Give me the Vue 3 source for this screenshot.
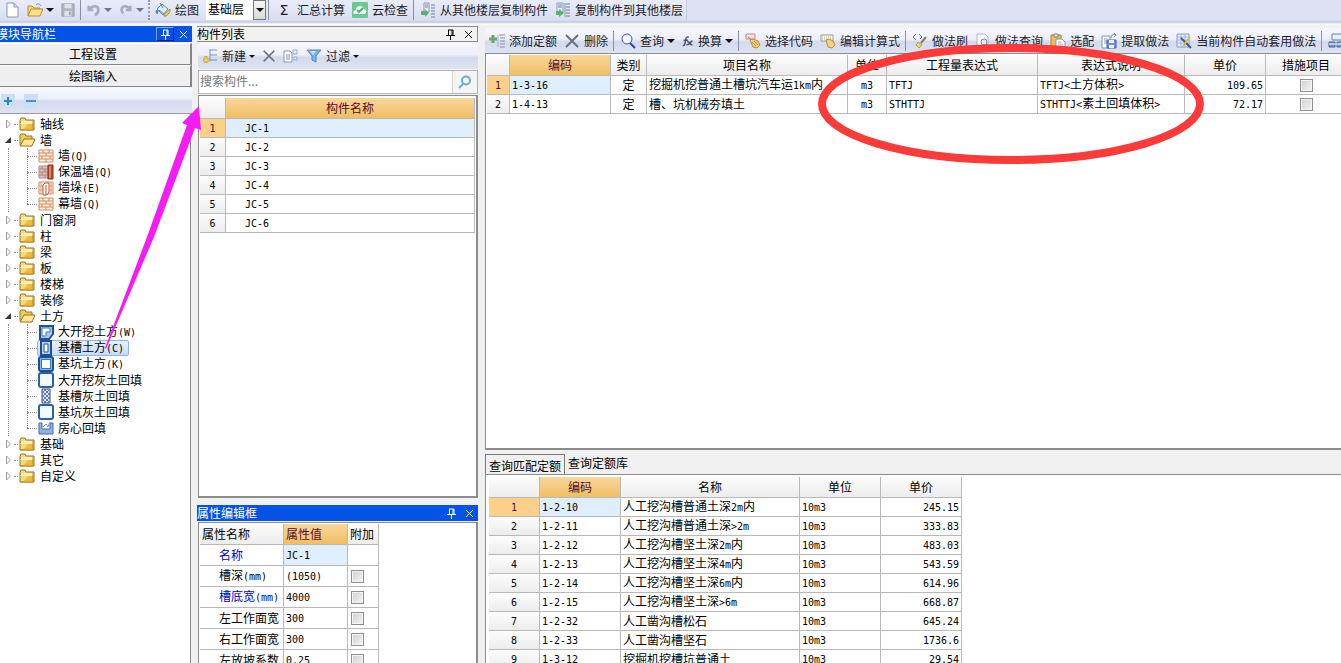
<script setup>
import { h, ref } from 'vue'

// Splits mixed text so half-width characters keep their narrow cell width
const T = (props) =>
  h(
    'span',
    { class: 'mixed' },
    (props.v.match(/[\x21-\x7e]+|[^\x21-\x7e]+/g) || []).map((run) =>
      /^[\x21-\x7e]/.test(run) ? h('span', { class: 'half' }, run) : run
    )
  )
T.props = ['v']

const art = {
  doc: '<path d="M3 1h7l4 4v10H3z" fill="#fff" stroke="#8c96ac"/><path d="M10 1v4h4" fill="#d9e2f2" stroke="#8c96ac"/>',
  open: '<path d="M1 14V4h4l2 2h6v3" fill="#f7d575" stroke="#c08d2c"/><path d="M1 14l3-7h12l-3 7z" fill="#fbe18e" stroke="#c08d2c"/><path d="M9 3c2-2 4-1 5 1" fill="none" stroke="#6b8cc4"/>',
  save: '<path d="M1 1h14v14H1z" fill="#aeb3c0" stroke="#9a9fad"/><path d="M4 1h8v5H4zM4 9h8v6H4z" fill="#dfe2ea"/><path d="M9 10h2v4H9z" fill="#9a9fad"/>',
  undo: '<path d="M2 3v5h5M3 7c4-5 10-4 10 1 0 3-2 5-4 6" fill="none" stroke="#a6adbf" stroke-width="3"/>',
  redo: '<path d="M13 3v5H8M12 7C9 2 3 3 3 8c0 2 1 3 2 4" fill="none" stroke="#a6adbf" stroke-width="3"/>',
  bucket: '<path d="M2 7l5-5 6 5-5 6z" fill="#dcebfa" stroke="#6287b8"/><path d="M4 8l5 4M5 1l3 5" stroke="#6287b8" fill="none"/><path d="M9 14c0-2 2-3 6-7 1 3-3 8-6 7z" fill="#f3cd58" stroke="#a68a38"/><path d="M1 8c-1 2 0 4 1 4s2-2 1-4z" fill="#4b88cf"/>',
  cloud: '<rect width="16" height="16" rx="1" fill="#6cc890"/><path d="M3 12c-3 0-2-4 1-4 0-5 7-5 8-1 3 0 3 5 0 5z" fill="#f4fcf7"/><path d="M5 8l2 2 4-4" fill="none" stroke="#4bb476" stroke-width="2"/>',
  floorFrom: '<path d="M4 1h5v9H4z" fill="#eef2fa" stroke="#8793ad"/><path d="M5 3h3M5 5h3M11 3h4M11 6h4M11 9h4M11 12h4M11 15h4" stroke="#6b83b3"/><path d="M1 9h4V7l4 4-4 4v-2H1z" fill="#53b36b"/>',
  floorTo: '<path d="M2 1h6v9H2z" fill="#eef2fa" stroke="#7f9dcb"/><path d="M3 3h4M3 5h4M11 2h4M11 5h4M11 8h4M11 11h4M11 14h4" stroke="#717b90"/><path d="M10 1v14" stroke="#8793ad"/><path d="M1 9h3V7l5 4-5 4v-2H1z" fill="#53b36b"/>',
  newItem: '<path d="M8 1v12M8 2h7M8 7h7M8 12h7" fill="none" stroke="#8093b5"/><path d="M4 8v7M1 12h7" stroke="#d5a31c" stroke-width="3"/><path d="M4 9v5M2 12h5" stroke="#ffe680"/>',
  cross: '<path d="M2 2l12 12M14 2L2 14" fill="none" stroke="#6d7078" stroke-width="2"/>',
  copy: '<path d="M1 3h6l2 2v9H1z" fill="#fff" stroke="#8594b3"/><path d="M3 7h4M3 9h4M3 11h4" stroke="#8594b3"/><path d="M10 2h4v4h-4zM11 9h3v3h-3z" fill="#eef3fb" stroke="#93a9cf"/>',
  funnel: '<path d="M1 2h14L10 8v6l-4-2V8z" fill="#7db1ea" stroke="#4f85c4"/><path d="M4 3h6L7 7z" fill="#c8e0f8"/>',
  addQuota: '<path d="M4 2v8M0 6h8" stroke="#69a86a" stroke-width="3"/><path d="M10 2h6M11 5h5M11 8h5M11 11h5M11 14h5" stroke="#8790a3"/><path d="M9 2v12" stroke="#a4adbd"/>',
  find: '<circle cx="7" cy="6" r="5" fill="#eef5ff" stroke="#46569b"/><path d="M10 10l5 5" stroke="#34449a" stroke-width="2"/>',
  fx: '<path d="M1 14c3 1 3-4 4-8 0-3 2-4 4-3M2 7h6M7 9c4-1 3 5 7 4M14 8c-3 0-4 6-8 5" fill="none" stroke="#4a5266" stroke-width="2"/>',
  pick: '<path d="M1 1h9v5H1z" fill="#f5e3e0" stroke="#c48a85"/><path d="M3 4l6 5" stroke="#b8665f"/><path d="M5 7l3-1 5 2 2 4-3 3-4-1z" fill="#f4cf7c" stroke="#b78d3b"/><path d="M7 9l4 4M9 8l4 4" stroke="#b78d3b"/>',
  calc: '<path d="M1 2h12v6H1z" fill="#fffbe9" stroke="#9b9b8f"/><path d="M2 4h10M2 6h10" stroke="#b8b29a" stroke-dasharray="1 1"/><path d="M6 7l3-1 4 2 2 4-3 3-4-1z" fill="#f4cf7c" stroke="#b78d3b"/>',
  brush: '<path d="M4 1L1 4l3 3M7 1l3 3-2 2" fill="none" stroke="#69718a"/><path d="M14 4l-5 6" stroke="#8e7b58" stroke-width="2"/><path d="M6 9l4 3-3 3-3-3z" fill="#f0d27a" stroke="#b99b43"/>',
  docFind: '<path d="M2 1h8l3 3v10H2z" fill="#f9fbff" stroke="#a9b4ca"/><circle cx="9" cy="9" r="3" fill="#dcecff" stroke="#7290bf"/><path d="M11 11l4 4" stroke="#b39051" stroke-width="2"/>',
  paste: '<path d="M1 2h10v12H1z" fill="#e9bd62" stroke="#a9802f"/><path d="M4 1h4v3H4z" fill="#d9dde5" stroke="#888"/><path d="M6 6h6l3 3v6H6z" fill="#fff" stroke="#8b93a5"/><path d="M8 9h3M8 11h5M8 13h5" stroke="#9fa9bc"/>',
  extract: '<path d="M1 3h8v12H1z" fill="#fff" stroke="#8594b3"/><path d="M3 6h3M3 8h3M3 10h3" stroke="#8594b3"/><path d="M6 7h9v8H6z" fill="#6f92cf" stroke="#44639e"/><path d="M8 7h5v3H8zM8 12h5v3H8z" fill="#eaf0fa"/><path d="M10 5c0-3 2-4 5-3M13 0l2 2-2 2" fill="none" stroke="#6785bb"/>',
  auto: '<path d="M1 1h12v13H1z" fill="#eaf1fc" stroke="#7f9acb"/><path d="M1 4h12M1 7h12M1 10h12M5 1v13M9 1v13" stroke="#9db3da"/><path d="M5 5l10 10" stroke="#46577c" stroke-width="2"/><path d="M14 4l-7 9" stroke="#e0b34d" stroke-width="2"/>',
  people: '<path d="M4 1h11v6H4z" fill="#e8effa" stroke="#6781b0"/><path d="M1 9h6v5H1zM9 9h6v5H9z" fill="#7d9cce" stroke="#44639e"/><path d="M1 11h14" stroke="#fff"/>',
  folder: '<path d="M1 14V4l1-2h4l1 2h8v10z" fill="#f6d979" stroke="#8d7433"/><path d="M2 5h12v3H2z" fill="#fff2b0"/><path d="M9 8h5v6H4z" fill="#efb93d"/><path d="M14 5v9H2" fill="none" stroke="#c08a22"/>',
  folderOpen: '<path d="M1 13V3l1-1h4l1 2h6v3" fill="#f3cb55" stroke="#8d7433"/><path d="M1 14l4-7h11l-3 7z" fill="#ffe88f" stroke="#8d7433"/>',
  brick: '<path d="M1 2h14v12H1z" fill="#fff1e4" stroke="#c98f6a"/><path d="M1 5h14M1 8h14M1 11h14M5 2v3M11 2v3M8 5v3M4 8v3M12 8v3M8 11v3" stroke="#d98555" fill="none"/>',
  brickWarm: '<path d="M1 2h9v12H1z" fill="#d9c4bd" stroke="#b09087"/><path d="M1 5h9M1 8h9M1 11h9M4 2v3M7 5v3M4 8v3M7 11v3" stroke="#a98278"/><path d="M10 1h5v14h-5z" fill="#b4492d" stroke="#8a3018"/><path d="M12 2v12" stroke="#f6cdbb"/>',
  pier: '<path d="M1 2h14v12H1z" fill="#fff1e4" stroke="#c98f6a"/><path d="M1 6h14M1 10h14M13 2v12M3 2v12" stroke="#e4a079"/><path d="M5 15V5l2-2h4v9l-2 3zM8 5v10" fill="#fff" stroke="#c25331"/>',
  pitL: '<path d="M2 2h13v8l-4 5H2z" fill="#a9cdf2" stroke="#1d5299" stroke-width="2"/><path d="M4 4h8v4H8v4H4z" fill="#fff" stroke="#3d75bb"/>',
  trench: '<path d="M3 1h10v14H3z" fill="#b9d4f3" stroke="#1d4f94" stroke-width="2"/><path d="M6 4h4v8H6z" fill="#fff" stroke="#1d4f94"/>',
  pit: '<rect x="1" y="1" width="14" height="14" rx="2" fill="#8ebbe9" stroke="#17509a" stroke-width="2"/><rect x="3.500" y="3.500" width="9" height="9" fill="#fff" stroke="#3d75bb"/>',
  fill: '<rect x="1" y="1" width="14" height="14" rx="2" fill="#f3f8ff" stroke="#2a60a8" stroke-width="2"/>',
  hatch: '<path d="M4 1h8v14H4z" fill="#dce7f5" stroke="#274f86"/><path d="M4 5l4-4M4 9l8-8M4 13l8-8M6 15l6-6M10 15l2-2M4 11l4 4M4 7l8 8M4 3l8 8M6 1l6 6" stroke="#5b7ba8"/>',
  room: '<path d="M1 3v11h14V3h-3v6H4V3z" fill="#8fb3dd" stroke="#3e6ca9"/><path d="M5 7l3-3 2 3 2-5" fill="none" stroke="#6c8fbf"/>'
}

const Icon = (props) =>
  h('svg', { class: 'icon', width: props.w || 16, height: props.w || 16, viewBox: '0 0 16 16', 'aria-hidden': 'true', innerHTML: art[props.n] })
Icon.props = ['n', 'w']

const mainTools = [
  { icon: 'doc', tip: '新建工程' },
  { icon: 'open', tip: '打开', menu: true },
  { icon: 'save', tip: '保存', w: 14 },
  { sep: true },
  { icon: 'undo', tip: '撤销', menu: true, w: 14, off: true },
  { icon: 'redo', tip: '恢复', menu: true, w: 14, off: true },
  { grip: true },
  { icon: 'bucket', text: '绘图' }
]
const floorTools = [
  { sep: true },
  { sigma: true, text: '汇总计算' },
  { icon: 'cloud', text: '云检查' },
  { sep: true },
  { icon: 'floorFrom', text: '从其他楼层复制构件' },
  { icon: 'floorTo', text: '复制构件到其他楼层' }
]
const listTools = [
  { icon: 'newItem', text: '新建', menu: true },
  { icon: 'cross', tip: '删除', w: 14 },
  { icon: 'copy', tip: '复制' },
  { icon: 'funnel', text: '过滤', menu: true }
]
const quotaTools = [
  { icon: 'addQuota', text: '添加定额' },
  { icon: 'cross', text: '删除' },
  { sep: true },
  { icon: 'find', text: '查询', menu: true },
  { icon: 'fx', text: '换算', menu: true, w: 12 },
  { sep: true },
  { icon: 'pick', text: '选择代码' },
  { icon: 'calc', text: '编辑计算式' },
  { sep: true },
  { icon: 'brush', text: '做法刷' },
  { icon: 'docFind', text: '做法查询' },
  { icon: 'paste', text: '选配' },
  { icon: 'extract', text: '提取做法' },
  { icon: 'auto', text: '当前构件自动套用做法' },
  { sep: true },
  { icon: 'people', tip: '更多' }
]

const Tools = (props) =>
  props.items.map((t) => {
    if (t.sep) return h('i', { class: 'sep' })
    if (t.grip) return h('i', { class: 'grip' })
    return h('button', { class: ['tool', { off: t.off }], type: 'button', 'aria-label': t.text || t.tip }, [
      t.sigma ? h('span', { class: 'sigma' }, 'Σ') : h(Icon, { n: t.icon, w: t.w }),
      t.text ? h('span', t.text) : null,
      t.menu ? h('i', { class: 'caret' }) : null
    ])
  })
Tools.props = ['items']

const tree = ref([
  { name: '轴线' },
  {
    name: '墙',
    kids: [
      { name: '墙(Q)', icon: 'brick' },
      { name: '保温墙(Q)', icon: 'brickWarm' },
      { name: '墙垛(E)', icon: 'pier' },
      { name: '幕墙(Q)', icon: 'brick' }
    ]
  },
  { name: '门窗洞' },
  { name: '柱' },
  { name: '梁' },
  { name: '板' },
  { name: '楼梯' },
  { name: '装修' },
  {
    name: '土方',
    kids: [
      { name: '大开挖土方(W)', icon: 'pitL' },
      { name: '基槽土方(C)', icon: 'trench' },
      { name: '基坑土方(K)', icon: 'pit' },
      { name: '大开挖灰土回填', icon: 'fill' },
      { name: '基槽灰土回填', icon: 'hatch' },
      { name: '基坑灰土回填', icon: 'fill' },
      { name: '房心回填', icon: 'room' }
    ]
  },
  { name: '基础' },
  { name: '其它' },
  { name: '自定义' }
])
const picked = ref('基槽土方(C)')
const keyword = ref('')
const floor = ref('基础层')

const parts = ['JC-1', 'JC-2', 'JC-3', 'JC-4', 'JC-5', 'JC-6']
const attrs = [
  { name: '名称', value: 'JC-1', blue: true },
  { name: '槽深(mm)', value: '(1050)', box: true },
  { name: '槽底宽(mm)', value: '4000', blue: true, box: true },
  { name: '左工作面宽', value: '300', box: true },
  { name: '右工作面宽', value: '300', box: true },
  { name: '左放坡系数', value: '0.25', box: true }
]
const quotas = [
  { code: '1-3-16', name: '挖掘机挖普通土槽坑汽车运1km内', expr: 'TFTJ', note: 'TFTJ<土方体积>', price: '109.65' },
  { code: '1-4-13', name: '槽、坑机械夯填土', expr: 'STHTTJ', note: 'STHTTJ<素土回填体积>', price: '72.17' }
]
const library = [
  ['1-2-10', '人工挖沟槽普通土深2m内', '245.15'],
  ['1-2-11', '人工挖沟槽普通土深>2m', '333.83'],
  ['1-2-12', '人工挖沟槽坚土深2m内', '483.03'],
  ['1-2-13', '人工挖沟槽坚土深4m内', '543.59'],
  ['1-2-14', '人工挖沟槽坚土深6m内', '614.96'],
  ['1-2-15', '人工挖沟槽坚土深>6m', '668.87'],
  ['1-2-32', '人工凿沟槽松石', '645.24'],
  ['1-2-33', '人工凿沟槽坚石', '1736.6'],
  ['1-3-12', '挖掘机挖槽坑普通土', '29.54']
]
</script>

<template>
  <div class="app">
    <header class="topbar">
      <div class="strip">
        <Tools :items="mainTools" />
        <div class="floor">
          <select v-model="floor" aria-label="楼层">
            <option>基础层</option>
          </select>
          <span class="drop"><i class="caret"></i></span>
        </div>
        <Tools :items="floorTools" />
      </div>
    </header>

    <main class="work">
      <aside class="nav">
        <div class="title active">
          <span class="cut">模块导航栏</span>
          <button class="pin framed" type="button" aria-label="固定">
            <svg width="11" height="11" viewBox="0 0 11 11"><path d="M3 1h5M3.500 1v5M7 1v5M8 1v5M1 6.500h9M5.500 7v4" fill="none" stroke="currentColor" /></svg>
          </button>
          <button class="pin" type="button" aria-label="关闭">
            <svg width="9" height="9" viewBox="0 0 9 9"><path d="M1 1l7 7M8 1L1 8" fill="none" stroke="currentColor" /></svg>
          </button>
        </div>
        <button class="section" type="button">工程设置</button>
        <button class="section" type="button">绘图输入</button>
        <div class="bar fold">
          <button class="mini" type="button" aria-label="展开">
            <svg width="12" height="12" viewBox="0 0 12 12"><path d="M6 2v8M2 6h8" stroke="#2f86c6" stroke-width="2" /></svg>
          </button>
          <button class="mini" type="button" aria-label="折叠">
            <svg width="12" height="12" viewBox="0 0 12 12"><path d="M1 6h10" stroke="#4a94cc" stroke-width="2" /></svg>
          </button>
        </div>
        <ul class="tree">
          <li v-for="node in tree" :key="node.name">
            <button class="node" type="button">
              <svg class="twist" width="8" height="10" viewBox="0 0 8 10">
                <path v-if="node.kids" d="M6 2v6H0z" fill="#333" />
                <path v-else d="M1.500 1l4 4-4 4z" fill="#fff" stroke="#999" />
              </svg>
              <i class="dash"></i>
              <Icon :n="node.kids ? 'folderOpen' : 'folder'" />
              <span>{{ node.name }}</span>
            </button>
            <ul v-if="node.kids" class="sub">
              <li v-for="kid in node.kids" :key="kid.name">
                <i class="dots"></i>
                <button class="leaf" :class="{ on: kid.name === picked }" type="button" @click="picked = kid.name">
                  <Icon :n="kid.icon" />
                  <T :v="kid.name" />
                </button>
              </li>
            </ul>
          </li>
        </ul>
      </aside>

      <section class="middle">
        <div class="title plain">
          <span>构件列表</span>
          <button class="pin" type="button" aria-label="固定">
            <svg width="11" height="11" viewBox="0 0 11 11"><path d="M3 1h5M3.500 1v5M7 1v5M8 1v5M1 6.500h9M5.500 7v4" fill="none" stroke="currentColor" /></svg>
          </button>
          <button class="pin" type="button" aria-label="关闭">
            <svg width="9" height="9" viewBox="0 0 9 9"><path d="M1 1l7 7M8 1L1 8" fill="none" stroke="currentColor" /></svg>
          </button>
        </div>
        <div class="bar list-bar"><Tools :items="listTools" /></div>
        <div class="search">
          <input v-model="keyword" type="text" placeholder="搜索构件..." aria-label="搜索构件" />
          <button type="button" aria-label="搜索">
            <svg width="14" height="14" viewBox="0 0 14 14"><circle cx="8" cy="5.500" r="4" fill="#f4faff" stroke="#62ace0" stroke-width="2" /><path d="M5 9l-4 4" stroke="#62ace0" stroke-width="2" /></svg>
          </button>
        </div>
        <div class="panel grow">
          <table class="grid parts">
            <colgroup><col class="c26" /><col /></colgroup>
            <thead><tr><th></th><th class="hot">构件名称</th></tr></thead>
            <tbody>
              <tr v-for="(p, i) in parts" :key="p" :class="{ cur: i === 0 }">
                <th scope="row"><T :v="String(i + 1)" /></th>
                <td class="key indent"><T :v="p" /></td>
              </tr>
            </tbody>
          </table>
        </div>
        <div class="attr-dock">
          <div class="title active">
            <span>属性编辑框</span>
            <button class="pin" type="button" aria-label="固定">
              <svg width="11" height="11" viewBox="0 0 11 11"><path d="M3 1h5M3.500 1v5M7 1v5M8 1v5M1 6.500h9M5.500 7v4" fill="none" stroke="currentColor" /></svg>
            </button>
            <button class="pin" type="button" aria-label="关闭">
              <svg width="9" height="9" viewBox="0 0 9 9"><path d="M1 1l7 7M8 1L1 8" fill="none" stroke="currentColor" /></svg>
            </button>
          </div>
          <div class="panel grow">
            <table class="grid attrs">
              <colgroup><col class="c84" /><col class="c64" /><col class="c31" /></colgroup>
              <thead><tr><th class="left">属性名称</th><th class="hot left">属性值</th><th class="left">附加</th></tr></thead>
              <tbody>
                <tr v-for="(a, i) in attrs" :key="a.name" :class="{ cur: i === 0 }">
                  <td class="indent" :class="{ blue: a.blue }"><T :v="a.name" /></td>
                  <td class="key"><T :v="a.value" /></td>
                  <td class="tick"><input v-if="a.box" type="checkbox" :aria-label="a.name + '附加'" /></td>
                </tr>
              </tbody>
            </table>
          </div>
        </div>
      </section>

      <section class="right">
        <div class="bar quota-bar"><Tools :items="quotaTools" /></div>
        <div class="panel grow">
          <table class="grid quotas">
            <colgroup>
              <col class="c23" /><col class="c101" /><col class="c36" /><col class="c201" /><col class="c39" />
              <col class="c151" /><col class="c147" /><col class="c81" /><col class="c81" />
            </colgroup>
            <thead>
              <tr>
                <th></th><th class="hot">编码</th><th>类别</th><th>项目名称</th><th>单位</th>
                <th>工程量表达式</th><th>表达式说明</th><th>单价</th><th>措施项目</th>
              </tr>
            </thead>
            <tbody>
              <tr v-for="(q, i) in quotas" :key="q.code" :class="{ cur: i === 0 }">
                <th scope="row"><T :v="String(i + 1)" /></th>
                <td class="key"><T :v="q.code" /></td>
                <td class="mid">定</td>
                <td><T :v="q.name" /></td>
                <td class="mid"><T v="m3" /></td>
                <td><T :v="q.expr" /></td>
                <td><T :v="q.note" /></td>
                <td class="num"><T :v="q.price" /></td>
                <td class="mid tick"><input type="checkbox" :aria-label="q.code + ' 措施项目'" /></td>
              </tr>
            </tbody>
          </table>
        </div>
        <div class="lib-dock">
          <div class="tabs">
            <button class="tab open" type="button">查询匹配定额</button>
            <button class="tab" type="button">查询定额库</button>
          </div>
          <div class="panel grow">
            <table class="grid library">
              <colgroup><col class="c51" /><col class="c81" /><col class="c179" /><col class="c81" /><col class="c81" /></colgroup>
              <thead><tr><th></th><th class="hot">编码</th><th>名称</th><th>单位</th><th>单价</th></tr></thead>
              <tbody>
                <tr v-for="(r, i) in library" :key="r[0]" :class="{ cur: i === 0 }">
                  <th scope="row"><T :v="String(i + 1)" /></th>
                  <td class="key"><T :v="r[0]" /></td>
                  <td><T :v="r[1]" /></td>
                  <td><T v="10m3" /></td>
                  <td class="num"><T :v="r[2]" /></td>
                </tr>
              </tbody>
            </table>
          </div>
        </div>
      </section>
    </main>

    <svg class="marks" width="1341" height="400" viewBox="0 0 1341 400" aria-hidden="true">
      <path d="M199 106L201 130L195 128L154 237L106 349L105 348L147 237L187 125L182 123Z" fill="#f31df3" />
      <ellipse cx="1011" cy="104" rx="189" ry="56" fill="none" stroke="#fb3a3a" stroke-width="8" />
    </svg>
  </div>
</template>

<style>
body {
  overflow: hidden;
}
.half {
  font-family: "DejaVu Sans Mono", monospace;
  font-size: 10px;
}
.icon {
  display: block;
  flex: none;
}
.tool {
  display: flex;
  align-items: center;
  gap: 4px;
  flex: none;
  height: 20px;
  padding: 0 3px 0 4px;
  border: 0;
  background: none;
  font: 12px/16px "Noto Sans CJK SC", sans-serif;
  color: #1c1c28;
  white-space: nowrap;
}
.caret {
  flex: none;
  border: 4px solid transparent;
  border-top-color: #111;
  border-bottom: 0;
}
.tool .caret {
  margin-left: -1px;
}
.list-bar .caret {
  border-width: 3px 3px 0;
}
.off .caret {
  border-top-color: #70768a;
}
.sep {
  flex: none;
  width: 1px;
  height: 20px;
  margin: 0 2px;
  background: #8a8fa3;
}
.grip {
  flex: none;
  height: 20px;
  margin: 0 1px;
  border-left: 2px dotted #9299b0;
}
.sigma {
  width: 18px;
  text-align: center;
  font: 14px/16px "DejaVu Sans", sans-serif;
}
</style>

<style scoped>
.app {
  position: relative;
  display: flex;
  flex-direction: column;
  height: 100vh;
  overflow: hidden;
  background: #f0f0f0;
  font: 12px/16px "Noto Sans CJK SC", sans-serif;
  color: #000;
}
.app * {
  box-sizing: border-box;
}
button {
  font: inherit;
  color: inherit;
}
.topbar {
  flex: none;
  display: flex;
  height: 26px;
  padding-bottom: 4px;
  background: linear-gradient(#dde1f2 0 20px, #c3c8dc 22px, #fafafd 24px, #f0f0f0);
}
.strip {
  display: flex;
  align-items: center;
  height: 20px;
  border-right: 1px solid #c6cbdf;
  background: linear-gradient(#e9ecf8, #d9def0);
}
.floor {
  position: relative;
  width: 60px;
  height: 20px;
  margin-left: 4px;
}
.floor select {
  appearance: none;
  width: 100%;
  height: 20px;
  padding: 0 2px 2px;
  border: 0;
  border-radius: 0;
  background: #fff;
  font: 12px/16px "Noto Sans CJK SC", sans-serif;
  color: #000;
}
.drop {
  position: absolute;
  top: 0;
  right: 0;
  display: flex;
  align-items: center;
  justify-content: center;
  width: 13px;
  height: 20px;
  border: 1px solid #777;
  background: linear-gradient(#f6f6f6, #d9d9d9);
  pointer-events: none;
}
.work {
  flex: 1;
  min-height: 0;
  display: grid;
  grid-template-columns: 192px 286px minmax(0, 1fr);
  grid-template-rows: minmax(0, 1fr);
}
.nav,
.middle,
.right,
.attr-dock,
.lib-dock {
  display: flex;
  flex-direction: column;
  min-height: 0;
}
.title {
  flex: none;
  display: flex;
  align-items: center;
  height: 16px;
  overflow: hidden;
  white-space: nowrap;
}
.title > span {
  flex: 1;
}
.title.active {
  background: #0453e6;
  color: #fff;
}
.title.plain {
  border: 1px solid #8e8e8e;
  border-left: 0;
  background: #f1f1f1;
}
.cut {
  margin-left: -4px;
}
.pin {
  display: flex;
  align-items: center;
  justify-content: center;
  flex: none;
  width: 18px;
  height: 14px;
  padding: 0;
  border: 0;
  background: none;
}
.framed {
  border: 1px solid #0b1f57;
  border-top-color: #7fa8ff;
  border-left-color: #7fa8ff;
}
.section {
  flex: none;
  height: 22px;
  padding: 0 4px 0 0;
  border: 1px solid #fff;
  border-right: 2px solid #858585;
  border-bottom: 1px solid #858585;
  border-left: 0;
  background: #efefef;
}
.nav .title {
  margin-bottom: 1px;
}
.bar {
  flex: none;
  display: flex;
  align-items: center;
  overflow: hidden;
  background: linear-gradient(#f7f8fc 0%, #eceff8 45%, #d3daec 55%, #dde3f2 100%);
}
.fold {
  height: 27px;
  gap: 9px;
  padding: 2px 0 0 1px;
  border-bottom: 1px solid #9a9aa2;
}
.mini {
  display: flex;
  align-items: center;
  justify-content: center;
  width: 14px;
  height: 14px;
  padding: 0;
  border: 0;
  background: #c9dff3;
}
.tree,
.sub {
  margin: 0;
  padding: 0;
  list-style: none;
}
.tree {
  flex: 1;
  min-height: 0;
  margin-right: 1px;
  padding-top: 2px;
  border-right: 1px solid #858585;
  background: #fff;
}
.node {
  display: flex;
  align-items: center;
  height: 16px;
  padding: 0 0 0 5px;
  border: 0;
  background: none;
  white-space: nowrap;
}
.dash {
  width: 4px;
  margin: 0 1px;
  border-top: 1px dotted #888;
}
.node span {
  padding-left: 5px;
}
.sub {
  position: relative;
  padding-left: 27px;
}
.sub::before,
.sub::after {
  content: "";
  position: absolute;
  top: 0;
  border-left: 1px dotted #888;
}
.sub::before {
  left: 8px;
  bottom: 0;
}
.sub::after {
  left: 27px;
  bottom: 8px;
}
.sub li {
  display: flex;
  align-items: center;
  height: 16px;
}
.dots {
  width: 10px;
  border-top: 1px dotted #888;
}
.leaf {
  display: flex;
  align-items: center;
  gap: 4px;
  height: 16px;
  padding: 0 4px 0 0;
  border: 1px solid transparent;
  border-radius: 2px;
  background: none;
  white-space: nowrap;
}
.leaf.on {
  border-color: #8fb4e3;
  background: linear-gradient(#e9f2fd, #c6dcf7);
}
.middle {
  padding-left: 5px;
}
.list-bar {
  height: 26px;
  margin: 1px 0 1px 1px;
}
.search {
  flex: none;
  display: flex;
  height: 24px;
  margin: 0 0 1px 1px;
  border: 1px solid #b4b4b4;
}
.search input {
  flex: 1;
  min-width: 0;
  padding: 0 1px 2px;
  border: 0;
  border-right: 1px solid #d5d5d5;
  background: #fff;
  font: inherit;
}
.search input::placeholder {
  color: #777;
}
.search button {
  display: flex;
  align-items: center;
  justify-content: center;
  width: 24px;
  padding: 0;
  border: 0;
  background: #f4f4f4;
}
.panel {
  min-height: 0;
  overflow: hidden;
  border: 1px solid #8c8c8c;
  border-width: 1px 2px 2px 1px;
  background: #fff;
}
.grow {
  flex: 1;
}
.middle .panel {
  margin-left: 1px;
  padding: 2px 1px 0;
}
.attr-dock {
  flex: 0 0 165px;
  padding-top: 7px;
}
.attr-dock .panel {
  padding-top: 1px;
  margin-top: 1px;
  border-bottom: 0;
}
.right {
  padding-left: 7px;
}
.quota-bar {
  height: 25px;
  margin-top: 2px;
}
.right .panel {
  padding: 1px 0 0 1px;
  border-right: 0;
}
.lib-dock {
  flex: 0 0 213px;
  padding-top: 4px;
}
.lib-dock .panel {
  padding: 2px 0 0 3px;
  border-bottom: 0;
}
.tabs {
  flex: none;
  display: flex;
  height: 20px;
}
.tab {
  height: 18px;
  padding: 0 3px;
  border: 0;
  background: none;
}
.tab.open {
  height: 20px;
  padding: 2px 3px 0;
  border: 1px solid #777;
  border-bottom: 0;
}
.grid {
  border-collapse: separate;
  border-spacing: 0;
  table-layout: fixed;
}
.parts { width: 100%; }
.attrs { width: 179px; }
.quotas { width: 860px; }
.library { width: 473px; }
.c23 { width: 23px; }
.c26 { width: 26px; }
.c31 { width: 31px; }
.c36 { width: 36px; }
.c39 { width: 39px; }
.c51 { width: 51px; }
.c64 { width: 64px; }
.c81 { width: 81px; }
.c84 { width: 84px; }
.c101 { width: 101px; }
.c147 { width: 147px; }
.c151 { width: 151px; }
.c179 { width: 179px; }
.c201 { width: 201px; }
.grid th,
.grid td {
  height: 19px;
  padding: 0 2px;
  overflow: hidden;
  border-right: 1px solid #b9b9b9;
  border-bottom: 1px solid #b9b9b9;
  line-height: 16px;
  font-weight: normal;
  text-align: left;
  white-space: nowrap;
}
.grid th {
  background: linear-gradient(#fdfdfd, #ececec);
  text-align: center;
}
.grid thead th {
  height: 21px;
}
.grid .left {
  text-align: left;
}
.grid .hot {
  background: linear-gradient(#f8d79c, #f0be62);
  color: #5c0a2c;
}
.grid .cur th {
  background: #fdd08a;
  color: #5c0a2c;
}
.grid .cur .key {
  background: #dfeefc;
}
.grid .indent {
  padding-left: 19px;
}
.grid .mid {
  text-align: center;
}
.grid .num {
  text-align: right;
}
.attrs td {
  height: 21px;
}
.attrs .blue {
  color: #0000c8;
}
.tick input {
  appearance: none;
  display: block;
  width: 13px;
  height: 13px;
  margin: 0;
  border: 1px solid #8f8f8f;
  background: linear-gradient(135deg, #cfcfcf, #f6f6f6);
  box-shadow: inset 0 0 0 1px #f4f4f4;
}
.attrs .tick input {
  margin-left: 1px;
}
.mid.tick input {
  margin: 0 auto;
}
.marks {
  position: absolute;
  top: 0;
  left: 0;
  pointer-events: none;
}
</style>
